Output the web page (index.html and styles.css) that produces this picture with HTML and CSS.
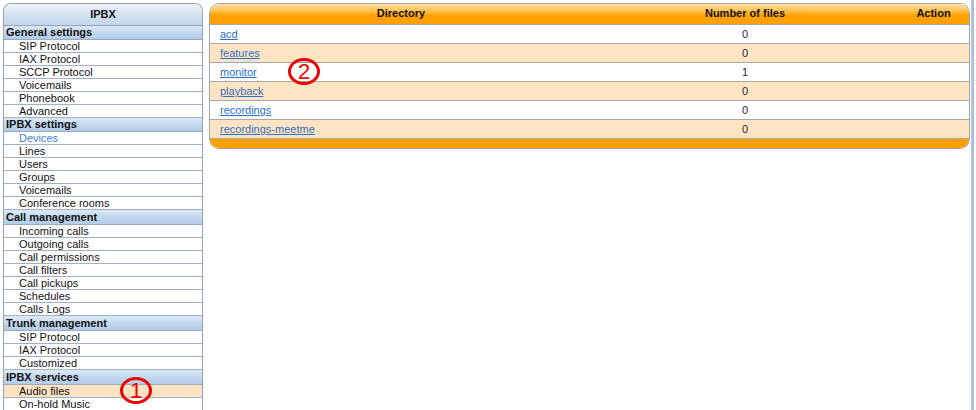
FILE: index.html
```html
<!DOCTYPE html>
<html>
<head>
<meta charset="utf-8">
<title>IPBX - Audio files</title>
<link rel="stylesheet" href="styles.css">
</head>
<body>
<div class="page">
  <nav class="sidebar">
    <div class="sb-title">IPBX</div>
    <div class="sb-section">General settings</div>
    <a class="sb-item" href="#">SIP Protocol</a>
    <a class="sb-item" href="#">IAX Protocol</a>
    <a class="sb-item" href="#">SCCP Protocol</a>
    <a class="sb-item" href="#">Voicemails</a>
    <a class="sb-item" href="#">Phonebook</a>
    <a class="sb-item" href="#">Advanced</a>
    <div class="sb-section">IPBX settings</div>
    <a class="sb-item sb-link" href="#">Devices</a>
    <a class="sb-item" href="#">Lines</a>
    <a class="sb-item" href="#">Users</a>
    <a class="sb-item" href="#">Groups</a>
    <a class="sb-item" href="#">Voicemails</a>
    <a class="sb-item" href="#">Conference rooms</a>
    <div class="sb-section sb-section-tall">Call management</div>
    <a class="sb-item" href="#">Incoming calls</a>
    <a class="sb-item" href="#">Outgoing calls</a>
    <a class="sb-item" href="#">Call permissions</a>
    <a class="sb-item" href="#">Call filters</a>
    <a class="sb-item" href="#">Call pickups</a>
    <a class="sb-item" href="#">Schedules</a>
    <a class="sb-item" href="#">Calls Logs</a>
    <div class="sb-section sb-section-tall">Trunk management</div>
    <a class="sb-item" href="#">SIP Protocol</a>
    <a class="sb-item" href="#">IAX Protocol</a>
    <a class="sb-item" href="#">Customized</a>
    <div class="sb-section sb-section-tall">IPBX services</div>
    <a class="sb-item sb-active" href="#">Audio files<span class="mark mark-1">1</span></a>
    <a class="sb-item" href="#">On-hold Music</a>
  </nav>

  <main class="content">
    <div class="dir-box">
      <div class="dir-head">
        <div class="c-dir">Directory</div>
        <div class="c-num">Number of files</div>
        <div class="c-act">Action</div>
      </div>
      <div class="dir-row">
        <div class="c-dir"><a href="#">acd</a></div>
        <div class="c-num">0</div>
        <div class="c-act"></div>
      </div>
      <div class="dir-row alt">
        <div class="c-dir"><a href="#">features</a></div>
        <div class="c-num">0</div>
        <div class="c-act"></div>
      </div>
      <div class="dir-row">
        <div class="c-dir"><a href="#">monitor</a><span class="mark mark-2">2</span></div>
        <div class="c-num">1</div>
        <div class="c-act"></div>
      </div>
      <div class="dir-row alt">
        <div class="c-dir"><a href="#">playback</a></div>
        <div class="c-num">0</div>
        <div class="c-act"></div>
      </div>
      <div class="dir-row">
        <div class="c-dir"><a href="#">recordings</a></div>
        <div class="c-num">0</div>
        <div class="c-act"></div>
      </div>
      <div class="dir-row alt">
        <div class="c-dir"><a href="#">recordings-meetme</a></div>
        <div class="c-num">0</div>
        <div class="c-act"></div>
      </div>
      <div class="dir-foot"></div>
    </div>
  </main>

  <div class="frame-edge"></div>
</div>
</body>
</html>
```

FILE: styles.css
```css
* { box-sizing: border-box; }

body {
  margin: 0;
  background: #ffffff;
  font-family: "Liberation Sans", Arial, sans-serif;
  font-size: 11px;
  color: #111;
}

.page {
  display: flex;
  align-items: flex-start;
  height: 410px;
  padding: 3px 0 0 3px;
  overflow: hidden;
}

/* ---------- sidebar ---------- */
.sidebar {
  width: 200px;
  flex: none;
  border: 1px solid #8fa2b8;
  border-bottom: none;
  border-radius: 8px 8px 0 0;
  overflow: hidden;
}

.sb-title {
  height: 22px;
  line-height: 21px;
  text-align: center;
  font-weight: bold;
  background: linear-gradient(#edf3f9, #d2e1f1 55%, #c3d7ec);
  border-bottom: 1px solid #8fa2b8;
}

.sb-section {
  height: 14px;
  line-height: 13px;
  padding-left: 2px;
  font-weight: bold;
  background: linear-gradient(#dce9f6, #c0d6ed 60%, #b2cbe6);
  border-bottom: 1px solid #98abc2;
}

.sb-section-tall {
  height: 15px;
  line-height: 14px;
}

.sb-item {
  display: block;
  position: relative;
  height: 13px;
  line-height: 12px;
  padding-left: 15px;
  color: #111;
  text-decoration: none;
  border-bottom: 1px solid #9fb2c8;
  background: #fff;
}

.sb-link { color: #3b80d6; }
.sb-active { background: #fde3c2; }

/* ---------- directory table ---------- */
.content {
  margin-left: 6px;
  width: 761px;
  flex: none;
}

.dir-box {
  border: 1px solid #a4a4a4;
  border-radius: 10px;
  overflow: hidden;
  background: #fff;
}

.dir-head,
.dir-row {
  display: grid;
  grid-template-columns: 382px 306px 1fr;
}

.dir-head {
  height: 20px;
  line-height: 19px;
  font-weight: bold;
  color: #111;
  background: linear-gradient(#ffe3b0, #ffb52e 45%, #ffa200 55%, #ffa000);
}

.dir-head .c-dir,
.dir-head .c-num,
.dir-head .c-act { text-align: center; }

.dir-row {
  height: 19px;
  line-height: 18px;
  border-top: 1px solid #a8a8a8;
  background: #fff;
}

.dir-row.alt { background: #ffe4c3; }

.dir-row .c-dir {
  position: relative;
  padding-left: 10px;
}

.dir-row .c-num {
  text-align: center;
  color: #1c2540;
}

.dir-row a {
  color: #2c6fc4;
  text-decoration: underline;
}

.dir-foot {
  height: 10px;
  border-top: 1px solid #a8a8a8;
  background: #ffa000;
}

/* ---------- frame edge ---------- */
.frame-edge {
  width: 3px;
  margin-left: 1px;
  margin-top: -3px;
  height: 410px;
  flex: none;
  background: linear-gradient(90deg, #b5c9e0, #a2bad6);
}

/* ---------- annotation marks ---------- */
.mark {
  position: absolute;
  z-index: 5;
  width: 32px;
  height: 27px;
  border: 3px solid #ee0000;
  border-radius: 50%;
  color: #ee0000;
  font-size: 22px;
  line-height: 21px;
  text-align: center;
  font-weight: normal;
}

.mark-1 {
  left: 116px;
  top: -8px;
}

.mark-2 {
  left: 78px;
  top: -5px;
}
```
